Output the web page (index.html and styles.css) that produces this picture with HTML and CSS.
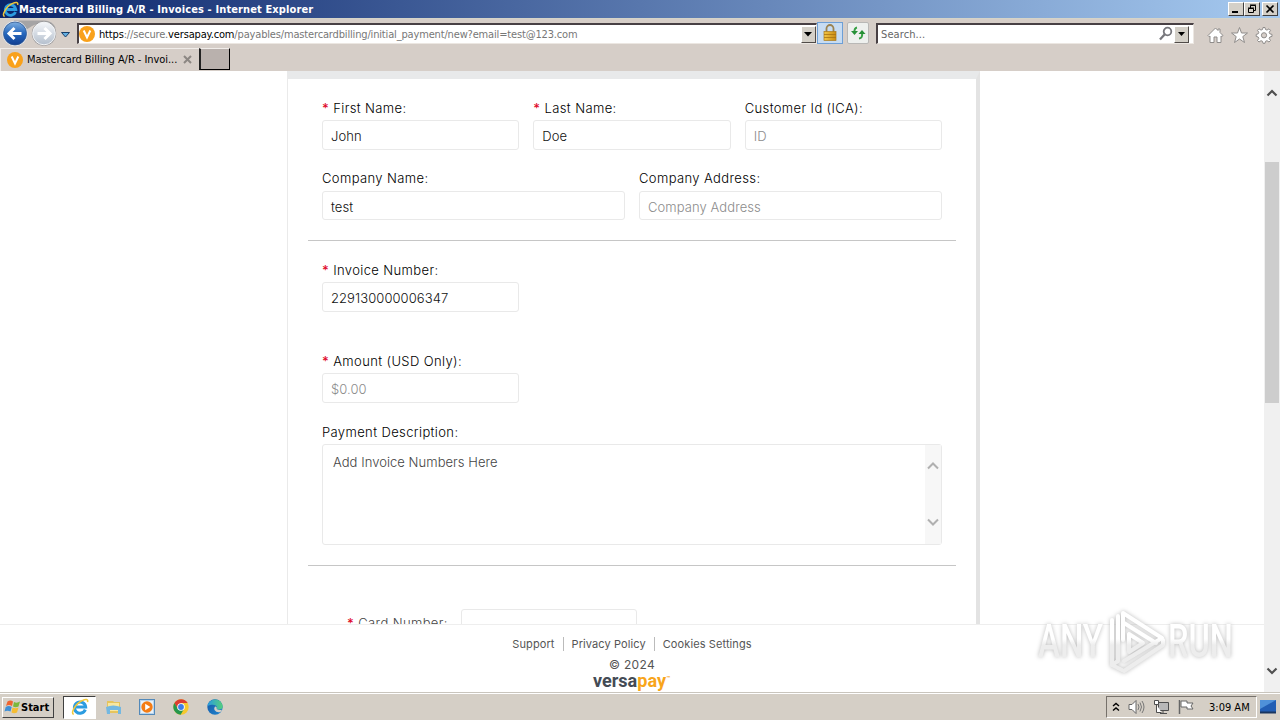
FILE: index.html
```html
<!DOCTYPE html>
<html lang="en">
<head>
<meta charset="utf-8">
<title>Mastercard Billing A/R - Invoices</title>
<link rel="stylesheet" href="styles.css">
</head>
<body>

<svg class="defs" width="0" height="0">
  <defs>
    <linearGradient id="blue" x1="0" y1="0" x2="0" y2="1">
      <stop offset="0" stop-color="#7eaee0"/><stop offset=".5" stop-color="#2667bd"/><stop offset="1" stop-color="#123f91"/>
    </linearGradient>
    <linearGradient id="pale" x1="0" y1="0" x2="0" y2="1">
      <stop offset="0" stop-color="#f4f6f9"/><stop offset="1" stop-color="#b4bfcd"/>
    </linearGradient>
    <linearGradient id="gold" x1="0" y1="0" x2="1" y2="0">
      <stop offset="0" stop-color="#f3c746"/><stop offset="1" stop-color="#c88a12"/>
    </linearGradient>
    <linearGradient id="edge" x1="0" y1="0" x2="1" y2="1">
      <stop offset="0" stop-color="#1757a5"/><stop offset="1" stop-color="#1f86d0"/>
    </linearGradient>
    <linearGradient id="wave" x1="0" y1="0" x2="1" y2="0">
      <stop offset="0" stop-color="#2a9be0"/><stop offset="1" stop-color="#55cf7c"/>
    </linearGradient>
    <symbol id="ie" viewBox="0 0 16 16">
      <path d="M12.7 10.3A5 5 0 1 1 13 8H4" fill="none" stroke="#2c9ce0" stroke-width="2.7"/>
      <path d="M2.5 14.5C-1 14 4 5 10 2.300C13 .8 15.500.8 14.700 3.700" fill="none" stroke="#f1c83a" stroke-width="1.4"/>
    </symbol>
    <symbol id="vp" viewBox="0 0 16 16">
      <circle cx="8" cy="8" r="8" fill="#f9a11b"/>
      <path d="M4.700 4.500 8 11.500 11.300 4.500" fill="none" stroke="#fff" stroke-width="2"/>
    </symbol>
  </defs>
</svg>

<div class="window">
  <div class="titlebar">
    <svg class="app-icon" width="17" height="17"><use href="#ie"/></svg>
    <span class="title">Mastercard Billing A/R - Invoices - Internet Explorer</span>
    <div class="controls">
      <span class="ctl"><svg width="14" height="12"><path d="M3 9h6" stroke="#000" stroke-width="2"/></svg></span>
      <span class="ctl"><svg width="14" height="12"><path d="M5.500 5V2.500h5v5H9M5 2h6" fill="none" stroke="#000"/><path d="M3.500 5.500h5v4h-5zM3 5h6" fill="none" stroke="#000"/></svg></span>
      <span class="ctl close"><svg width="14" height="12"><path d="M3.500 2.500l7 7M10.500 2.500l-7 7" stroke="#000" stroke-width="1.700"/></svg></span>
    </div>
  </div>

  <div class="toolbar">
    <svg class="nav" width="74" height="28" viewBox="0 0 74 28">
      <path d="M14 1.500H44a13 13 0 0 1 12 8Q50 3 42 4T29 9 14 4z" fill="#a5a4a5"/>
      <circle cx="15" cy="14.500" r="12.500" fill="#e9eef5"/>
      <circle cx="15" cy="14.500" r="11.500" fill="url(#blue)" stroke="#30578f" stroke-width=".8"/>
      <path d="M21.500 14.500H9M14.500 9 9 14.500l5.500 5.500" fill="none" stroke="#fff" stroke-width="3"/>
      <circle cx="44" cy="14.500" r="12.200" fill="#98979a"/>
      <circle cx="44" cy="14.500" r="11.300" fill="url(#pale)" stroke="#f3f5f7"/>
      <path d="M37.500 14.500H50M44.500 9 50 14.500l-5.500 5.500" fill="none" stroke="#fff" stroke-width="3"/>
      <path d="M61.500 13.500h8l-4 4.500z" fill="#63afe2" stroke="#173e69"/>
    </svg>
    <div class="address">
      <svg width="16" height="16"><use href="#vp"/></svg>
      <span class="url"><b>https</b>://secure.<b>versapay.com</b>/payables/mastercardbilling/initial_payment/new?email=test@123.com</span>
      <span class="drop"><svg width="9" height="5"><path d="M0 0h8L4 4.500z"/></svg></span>
    </div>
    <div class="tool lock">
      <svg width="14" height="18" viewBox="0 0 14 18"><path d="M3.500 8V4.500a3.500 3.500 0 0 1 7 0V8" fill="none" stroke="#9b8351" stroke-width="1.800"/><rect x="1" y="7.500" width="12" height="9" fill="url(#gold)" stroke="#a87a1e" stroke-width=".7"/><path d="M1 10.500h12M1 13.500h12" stroke="#a87412" stroke-width=".8"/></svg>
    </div>
    <div class="tool refresh">
      <svg width="16" height="16" viewBox="0 0 16 16"><path d="M7 2.500Q4 3 4.500 8M9 13.500Q13 13 12 8" fill="none" stroke="#37a044" stroke-width="2"/><path d="M1 6h7l-3.500 4zM8.500 9h7L12 5z" fill="#269037"/></svg>
    </div>
    <div class="search">
      <span>Search...</span>
      <svg width="16" height="16" viewBox="0 0 16 16"><circle cx="9.500" cy="5.500" r="3.800" fill="none" stroke="#77777c" stroke-width="1.800"/><path d="M6.800 8.300 2 13.500" stroke="#77777c" stroke-width="2.300"/></svg>
      <span class="drop"><svg width="8" height="5"><path d="M0 0h7L3.500 4z"/></svg></span>
    </div>
    <svg class="commands" width="68" height="18" viewBox="0 0 68 18" fill="#fff" stroke="#8f8c8a">
      <path d="M1 9.500 8.500 2l2.500 2.500V3h2v3.500l3 3-1.200 1L14 10v6.500h-4V11H7v5.500H3V10l-1 .7z"/>
      <path d="M32.500 1.500l2 5.500h6l-4.700 3.600 1.700 5.900-5-3.500-5 3.500 1.700-5.900L24.500 7h6z"/>
      <path d="M56 1.500h2l.5 2 1.500.6 2-1.300 1.500 1.500-1.300 2 .6 1.500 2.200.6v2l-2.200.6-.6 1.500 1.300 2-1.500 1.500-2-1.300-1.500.6-.5 2h-2l-.5-2-1.500-.6-2 1.300-1.500-1.500 1.300-2-.6-1.500-2-.6v-2l2-.6.6-1.500-1.300-2L52 2.800l2 1.300 1.500-.6z"/>
      <circle cx="57" cy="9.300" r="2.600" fill="#d6cec8"/>
    </svg>
  </div>

  <div class="tabs">
    <div class="tab">
      <svg width="16" height="16"><use href="#vp"/></svg>
      <span>Mastercard Billing A/R - Invoi...</span>
      <svg class="tab-close" width="9" height="9"><path d="M1 1l7 7M8 1 1 8" stroke="#8c8783" stroke-width="2"/></svg>
    </div>
    <div class="new-tab"></div>
  </div>

  <div class="viewport">
    <div class="page">
      <div class="scroll">
        <form class="card">
          <div class="row">
            <div class="field"><label><i>*</i> First Name:</label><div class="input">John</div></div>
            <div class="field"><label><i>*</i> Last Name:</label><div class="input">Doe</div></div>
            <div class="field"><label>Customer Id (ICA):</label><div class="input empty">ID</div></div>
          </div>
          <div class="row company">
            <div class="field"><label>Company Name:</label><div class="input">test</div></div>
            <div class="field"><label>Company Address:</label><div class="input empty">Company Address</div></div>
          </div>
          <hr>
          <div class="row invoice">
            <div class="field"><label><i>*</i> Invoice Number:</label><div class="input">229130000006347</div></div>
          </div>
          <div class="row amount">
            <div class="field"><label><i>*</i> Amount (USD Only):</label><div class="input empty">$0.00</div></div>
          </div>
          <div class="field description">
            <label>Payment Description:</label>
            <div class="textarea">
              <span>Add Invoice Numbers Here</span>
              <div class="inner-scroll">
                <svg width="12" height="8"><path d="M1 6.500 6 1.500l5 5" fill="none" stroke="#b0b0b0" stroke-width="2"/></svg>
                <svg width="12" height="8"><path d="M1 1.500l5 5 5-5" fill="none" stroke="#b0b0b0" stroke-width="2"/></svg>
              </div>
            </div>
          </div>
          <hr>
          <div class="card-number">
            <label><i>*</i> Card Number:</label>
            <div class="input"></div>
          </div>
        </form>
      </div>
      <footer class="footer">
        <div class="links"><a>Support</a><a>Privacy Policy</a><a>Cookies Settings</a></div>
        <div class="copy">© 2024</div>
        <svg class="brand" width="80" height="20" viewBox="0 0 80 20">
          <text x="1" y="14.500" textLength="73" lengthAdjust="spacingAndGlyphs">versa<tspan class="pay">pay</tspan></text>
          <text class="tm" x="74.500" y="8">™</text>
        </svg>
      </footer>
      <svg class="watermark" width="230" height="76" viewBox="0 0 230 76">
        <defs>
          <linearGradient id="mark" gradientUnits="userSpaceOnUse" x1="0" y1="36" x2="0" y2="42">
            <stop offset="0" stop-color="#fff"/><stop offset="1" stop-color="#ededed"/>
          </linearGradient>
        </defs>
        <g fill="url(#mark)">
          <text x="8" y="54" textLength="65" lengthAdjust="spacingAndGlyphs">ANY</text>
          <text x="138" y="54" textLength="65" lengthAdjust="spacingAndGlyphs">RUN</text>
        </g>
        <g fill="none" stroke="url(#mark)" stroke-width="4" stroke-linejoin="round" stroke-linecap="round">
          <path d="M82 17v45l6-4V13"/>
          <path d="M93 37V10l39 25-38 23"/>
          <path d="M94 20l32 20M99 31v18l14-9z"/>
          <path d="M82 62l12 6 39-26v-5"/>
        </g>
      </svg>
    </div>
    <div class="scrollbar">
      <svg width="12" height="8"><path d="M1.500 6.500 6 2l4.500 4.500" fill="none" stroke="#505050" stroke-width="2.200"/></svg>
      <div class="thumb"></div>
      <svg width="12" height="8"><path d="M1.500 1.500 6 6l4.500-4.500" fill="none" stroke="#505050" stroke-width="2.200"/></svg>
    </div>
  </div>

  <div class="taskbar">
    <div class="start">
      <svg width="17" height="16" viewBox="0 0 17 16"><path d="M3.500 2.500q3-2 5.500 0L8 7Q5 5 2 7z" fill="#ef6430"/><path d="M10 3q3 1.500 6-.5L14.500 7.500q-3 1.500-5.500 0z" fill="#7bb83c"/><path d="M1.700 8q3-2 6 0L6.500 12.500Q3.500 11 .5 12.500z" fill="#3e8fd6"/><path d="M8.500 8.500q3 1.500 6 0L13 13.500q-3 1.500-5.500 0z" fill="#f5bd32"/></svg>
      <b>Start</b>
    </div>
    <div class="tasks">
      <span class="task active"><svg width="18" height="18"><use href="#ie"/></svg></span>
      <span class="task"><svg width="17" height="16" viewBox="0 0 17 16"><path d="M2 2h6l1 1h6v11H2z" fill="#e6c45d"/><path d="M3 4h11v8H3z" fill="#f8e7a0"/><path d="M1 8q7-3 15 0v7h-3v-4H5v4H2z" fill="#74b8e1"/></svg></span>
      <span class="task"><svg width="16" height="16" viewBox="0 0 16 16"><rect x=".5" y=".5" width="15" height="15" fill="#b9d5ed" stroke="#5389b9"/><rect x="2" y="2" width="12" height="12" fill="#e8f1f8"/><circle cx="8" cy="8" r="5.700" fill="#f47c14"/><path d="M6.200 4.700v6.600L11.300 8z" fill="#fff"/></svg></span>
      <span class="task"><svg width="16" height="16" viewBox="0 0 16 16"><circle cx="8" cy="8" r="7.700" fill="#f6c92d"/><path d="M1.400 4A7.700 7.700 0 0 1 14.700 4H8L4.800 10z" fill="#dc3d31"/><path d="M1.400 4A7.700 7.700 0 0 0 7.600 15.700L11 10H5z" fill="#26974d"/><circle cx="8" cy="8" r="3.800" fill="#fff"/><circle cx="8" cy="8" r="2.900" fill="#3d7ee8"/></svg></span>
      <span class="task"><svg width="16" height="16" viewBox="0 0 16 16"><circle cx="8" cy="8" r="7.700" fill="url(#edge)"/><path d="M.4 7C2-1.500 14-2 15.700 7c.2 4-3.500 4-6 3 1.500-3.500-3-6-9.300-3z" fill="url(#wave)"/><path d="M9.600 10q2 1.500 5.500.8L13.500 13q-4 1-6-2-.8-2 .5-3.500 2.500.5 1.600 2.500z" fill="#d5cfc6"/></svg></span>
    </div>
    <div class="tray">
      <svg width="8" height="10"><path d="M1 4 4 1.500 7 4M1 8.500 4 6 7 8.500" fill="none" stroke="#000" stroke-width="1.400"/></svg>
      <svg width="17" height="16" viewBox="0 0 17 16"><path d="M1 5.500h3l4-4v13l-4-4H1z" fill="#fff" stroke="#666"/><path d="M10 5q2 3 0 6M12 3.500q3 4.500 0 9M14 2q4 6 0 12" fill="none" stroke="#777"/></svg>
      <svg width="17" height="16" viewBox="0 0 17 16"><path d="M5.500 3.500h10v8h-10zM7 14.500h7M10 12v2" fill="#b8b8b8" stroke="#4e4e4e"/><path d="M1.500 1.500v4h4v-4zM3.500 5.500v8h5" fill="#fff" stroke="#4e4e4e"/></svg>
      <svg width="17" height="16" viewBox="0 0 17 16"><path d="M1.500 1v14" stroke="#666" stroke-width="1.500"/><path d="M3 2h6v2h6l-2 3 2 3H9V8H3z" fill="#fff" stroke="#666"/></svg>
      <span class="clock">3:09 AM</span>
    </div>
    <svg class="desktop" width="16" height="14" viewBox="0 0 16 14"><rect width="16" height="13" fill="#225eb4"/><path d="M0 0h16L0 9z" fill="#4f91d9"/><path d="M0 12.500h16" stroke="#183560" stroke-width="2"/></svg>
  </div>
</div>

</body>
</html>
```
FILE: styles.css
```css
* {
  box-sizing: border-box;
}

body {
  margin: 0;
  width: 1280px;
  height: 720px;
  overflow: hidden;
  background: #fff;
  font: 11px "DejaVu Sans Condensed", "DejaVu Sans", sans-serif;
  font-stretch: condensed;
  color: #000;
}

svg {
  display: block;
  flex: none;
}

.defs {
  position: absolute;
}

.window {
  display: flex;
  flex-direction: column;
  height: 720px;
}

/* browser frame */
.titlebar {
  display: flex;
  align-items: center;
  height: 18px;
  padding: 0 2px 0 2px;
  background: linear-gradient(90deg, #0a246a, #a6caf0);
  color: #fff;
}

.title {
  font-weight: bold;
  font-size: 11px;
  letter-spacing: .12px;
  white-space: nowrap;
}

.controls {
  display: flex;
  margin-left: auto;
}

.ctl {
  width: 16px;
  height: 14px;
  background: #d4d0c8;
  border: 1px solid;
  border-color: #fff #404040 #404040 #fff;
}

.close {
  margin-left: 2px;
}

.toolbar {
  display: flex;
  align-items: flex-start;
  height: 30px;
  padding-top: 5px;
  background: #d6cec8;
  border-top: 1px solid #d5d4c8;
}

.nav {
  margin: -5px 2px 0 0;
}

.address, .search {
  display: flex;
  align-items: center;
  height: 21px;
  margin-top: -1px;
  background: #fff;
  border: 1px solid;
  border-width: 2px 1px 1px 2px;
  border-color: #484044 #ece7e2 #ece7e2 #484044;
}

.address {
  width: 740px;
  margin-left: 1px;
}

.url {
  margin-left: 4px;
  color: #777;
  letter-spacing: -.16px;
  white-space: nowrap;
}

.url b {
  font-weight: normal;
  color: #000;
}

.drop {
  display: flex;
  align-items: center;
  justify-content: center;
  width: 15px;
  height: 17px;
  margin-left: auto;
  background: #d4d0c8;
  border: 1px solid;
  border-color: #fff #504b48 #504b48 #fff;
}

.tool {
  display: flex;
  align-items: center;
  justify-content: center;
  height: 22px;
  margin-top: -2px;
}

.lock {
  width: 26px;
  background: #c7dcf2;
  border: 1px solid #6d9fd6;
}

.refresh {
  width: 22px;
  margin-left: 4px;
  background: #eef0ee;
  border: 1px solid #b9b8b6;
  border-radius: 2px;
}

.search {
  width: 318px;
  margin-left: 7px;
  padding-right: 4px;
  color: #666;
}

.search span:first-child {
  margin-left: 3px;
  letter-spacing: .1px;
}

.search > svg {
  margin-left: auto;
}

.search .drop {
  margin-left: 0;
}

.commands {
  margin: 2px 0 0 13px;
}

.tabs {
  display: flex;
  height: 23px;
  background: #d6cec8;
}

.tab {
  display: flex;
  align-items: center;
  width: 199px;
  padding: 0 0 1px 6px;
  border-top: 1px solid #f1edea;
  border-left: 1px solid #f1edea;
  white-space: nowrap;
}

.tab span {
  width: 153px;
  margin-left: 4px;
  letter-spacing: -.05px;
}

.tab-close {
  margin-left: 3px;
}

.new-tab {
  width: 31px;
  height: 22px;
  background: #b9b1ad;
  border: 2px solid;
  border-width: 1px 1px 1px 2px;
  border-color: #f1edea #000 #000 #222;
}

/* web page */
.viewport {
  display: flex;
  height: 621px;
}

.page {
  position: relative;
  width: 1264px;
  font-family: Inter, sans-serif;
  font-stretch: normal;
}

.scroll {
  height: 553px;
  overflow: hidden;
}

.card {
  width: 693px;
  height: 640px;
  margin-left: 287px;
  padding: 20px 34px 0;
  border-left: 1px solid #eaeaea;
  border-right: 4px solid #e3e3e3;
  border-top: 8px solid #e8e9ea;
}

.row {
  display: grid;
  grid-template-columns: repeat(3, 1fr);
  gap: 14px;
  width: 620px;
}

label {
  display: block;
  height: 21px;
  font-size: 13px;
  font-weight: 350;
  line-height: 19px;
  letter-spacing: .38px;
  white-space: nowrap;
}

label i {
  color: #e00b2b;
  font-style: normal;
  font-weight: 500;
}

.input {
  height: 30px;
  padding-left: 8px;
  border: 1px solid #e9e9e9;
  border-radius: 3px;
  font-size: 13px;
  font-weight: 350;
  line-height: 31px;
  letter-spacing: .08px;
  color: #111;
}

.input.empty {
  color: #8c8c8c;
}

.company {
  grid-template-columns: 1fr 1fr;
  margin-top: 19px;
}

.company label {
  height: 22px;
}

.company .input {
  height: 29px;
}

hr {
  width: 648px;
  height: 1px;
  margin: 20px 0 0 -14px;
  border: 0;
  background: #c6c6c6;
}

.invoice {
  margin-top: 20px;
}

.amount {
  margin-top: 40px;
}

.description {
  width: 620px;
  margin-top: 20px;
}

.textarea {
  display: flex;
  justify-content: space-between;
  height: 101px;
  border: 1px solid #e9e9e9;
  border-radius: 3px;
  color: #444;
  font-size: 13px;
  font-weight: 350;
  letter-spacing: .05px;
}

.textarea > span {
  padding: 9px 10px;
}

.inner-scroll {
  display: flex;
  flex-direction: column;
  align-items: center;
  justify-content: space-between;
  width: 16px;
  padding: 17px 0 18px;
  background: #f7f7f7;
}

.card-number {
  display: flex;
  margin: 43px 0 0 25px;
}

.card-number label {
  width: 114px;
  padding-top: 5px;
  color: #444;
}

.card-number .input {
  width: 176px;
}

.footer {
  display: flex;
  flex-direction: column;
  align-items: center;
  height: 68px;
  padding-top: 12px;
  border-top: 1px solid #eee;
  color: #555;
}

.links {
  display: flex;
  height: 14px;
  font-size: 11px;
  line-height: 14px;
  letter-spacing: .1px;
}

.links a {
  padding: 0 8px;
}

.links a + a {
  border-left: 1px solid #bbb;
}

.copy {
  margin-top: 6px;
  font-size: 12px;
  line-height: 15px;
  letter-spacing: .3px;
}

.brand {
  font: bold 18px Roboto, sans-serif;
  fill: #444b55;
}

.brand .pay, .brand .tm {
  fill: #f8a51b;
}

.brand .tm {
  font-size: 6px;
}

.watermark {
  position: absolute;
  left: 1030px;
  top: 532px;
  font: 500 47px Roboto, sans-serif;
  filter: drop-shadow(0 0 2px #bbb);
}

.scrollbar {
  display: flex;
  flex-direction: column;
  align-items: center;
  width: 16px;
  padding: 18px 0 17px;
  background: #f0f0f0;
}

.thumb {
  width: 14px;
  height: 241px;
  margin: 65px 0 auto;
  background: #cdcdcd;
}

/* taskbar */
.taskbar {
  display: flex;
  align-items: center;
  height: 28px;
  padding: 1px 4px 0 2px;
  background: #d5cfc6;
  border-top: 1px solid #c9c5bd;
  box-shadow: inset 0 1px #fff;
}

.start {
  display: flex;
  align-items: center;
  width: 52px;
  height: 21px;
  padding-left: 1px;
  border: 1px solid;
  border-color: #fff #404040 #404040 #fff;
}

.tasks {
  display: flex;
  margin-left: 9px;
}

.task {
  display: flex;
  align-items: center;
  justify-content: center;
  width: 34px;
  height: 23px;
}

.active {
  width: 33px;
  background: #fff;
  border: 1px solid;
  border-color: #404040 #fff #fff #404040;
}

.tray {
  display: flex;
  align-items: center;
  gap: 8px;
  width: 151px;
  height: 22px;
  margin-left: auto;
  padding-left: 5px;
  border: 1px solid;
  border-color: #76716b #fff #fff #76716b;
}

.clock {
  margin-left: 6px;
  white-space: nowrap;
}

.desktop {
  margin-left: 3px;
}
```
